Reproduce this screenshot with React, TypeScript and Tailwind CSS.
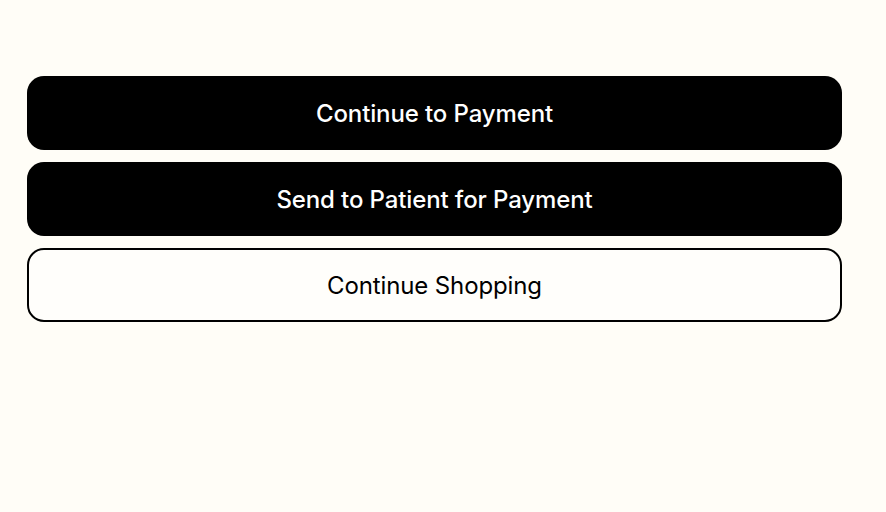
export default function App() {
  return (
    <div className="min-h-screen bg-[#fffdf7] font-['Inter','Liberation_Sans',sans-serif]">
      <div className="flex flex-col gap-3 pt-[76px] pl-[27px] pr-[44px]">
        <button className="h-[74px] w-full rounded-[17px] bg-black pt-[2px] text-[24px] font-medium tracking-[-0.005em] text-white">
          Continue to Payment
        </button>
        <button className="h-[74px] w-full rounded-[17px] bg-black pt-[2px] text-[24px] font-medium tracking-[-0.005em] text-white">
          Send to Patient for Payment
        </button>
        <button className="h-[74px] w-full rounded-[17px] border-2 border-black bg-[#fffefb] pt-[2px] text-[24px] font-normal tracking-[-0.005em] text-black">
          Continue Shopping
        </button>
      </div>
    </div>
  );
}
